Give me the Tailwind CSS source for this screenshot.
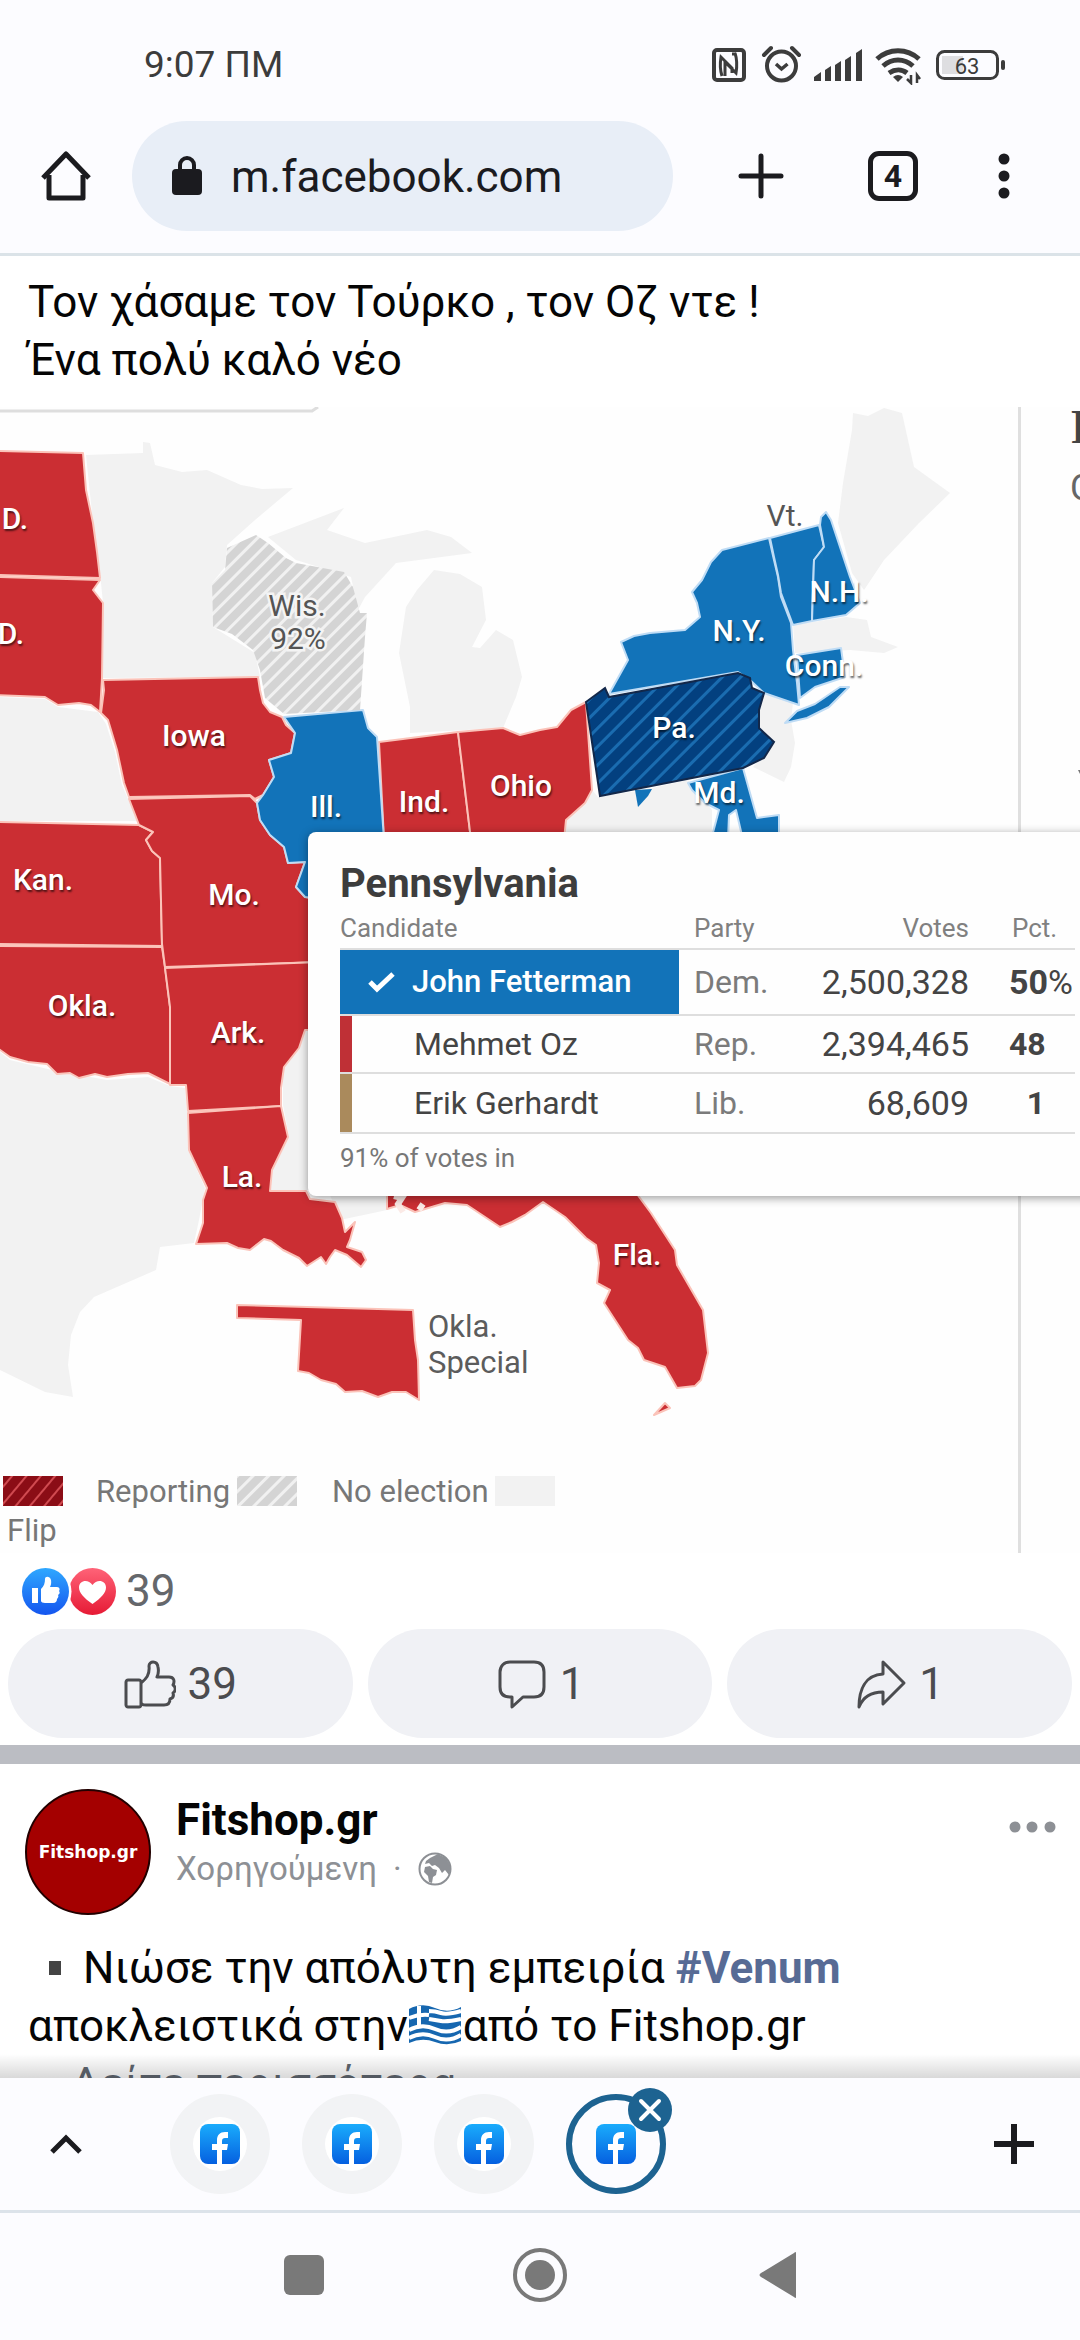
<!DOCTYPE html>
<html lang="el">
<head>
<meta charset="utf-8">
<meta name="viewport" content="width=device-width, initial-scale=1">
<title>m.facebook.com</title>
<script src="https://cdn.jsdelivr.net/npm/@tailwindcss/browser@4"></script>
</head>
<body class="flex h-screen flex-col overflow-hidden bg-white font-['Roboto',sans-serif] text-[#050505]">

<!-- Status bar -->
<div class="flex h-[120px] shrink-0 items-center justify-between bg-[#fcfcff] pt-2.5 pr-[75px] pl-[144px] text-[#3c3c3c]">
  <span class="text-[37px] leading-10">9:07 ΠΜ</span>
  <svg class="h-10 w-[294px]" viewBox="710 44 294 40" fill="none" stroke="#3c3c3c" aria-hidden="true">
    <rect x="713" y="49" width="30" height="30" rx="3" stroke-width="4"/>
    <path d="M721 75c-2-6-2-13-1-19l11 11v5M734 52c2 6 2 14 1 20l-11-11v14M731 53h4" stroke-width="3"/>
    <circle cx="780.500" cy="65" r="14.500" stroke-width="4"/>
    <path d="M775 63l5.500 5 6-5" stroke-width="3.500"/>
    <path d="M763 54l7-7M798 54l-7-7" stroke-width="4" stroke-linecap="round"/>
    <path d="M813 80v-4l7-5v9zM824 80V69l6-4v15zM834 80V64l6-4v20zM844 80V59l6-4v25zM855 80V52l6-4v32z" fill="#3c3c3c" stroke="none"/>
    <path d="M876 58c12-11 30-11 42 0M882 65c9-8 21-8 30 0M888 72c6-4 13-4 18 0" stroke-width="5"/>
    <path d="M892 76q5-4 10 0l-5 5z" fill="#3c3c3c" stroke="none"/>
    <path d="M910 74v8l-4-4M916 82v-8l3 4" stroke-width="2.500"/>
    <rect x="941" y="55" width="21" height="18" fill="#dedee1" stroke="none"/>
    <rect x="936.500" y="50.500" width="60" height="27" rx="7" stroke-width="3"/>
    <path d="M1002 61v6" stroke-width="4" stroke-linecap="round"/>
    <text x="966" y="72.500" text-anchor="middle" font-size="22" fill="#3c3c3c" stroke="none">63</text>
  </svg>
</div>

<!-- Browser toolbar -->
<header class="flex shrink-0 items-center border-b-[3px] border-[#dbe3e8] bg-[#fcfcff] pt-px pr-[64px] pb-[22px] pl-[38px]">
  <button aria-label="Home" class="shrink-0">
    <svg class="h-14 w-14" viewBox="0 0 56 56" fill="none" stroke="#1b1b1f" stroke-width="5" stroke-linejoin="round"><path d="M11 27v23h34V27"/><path d="M5 30L28 6l23 24"/></svg>
  </button>
  <label class="ml-[38px] flex h-[110px] max-w-[541px] min-w-0 flex-1 items-center rounded-full bg-[#e8eef7] pl-10">
    <svg class="h-10 w-[30px] shrink-0" viewBox="0 0 30 40" aria-hidden="true"><rect y="13" width="30" height="26" rx="4" fill="#1b1b1f"/><path d="M8 15V9a7 7 0 0 1 14 0v6" fill="none" stroke="#1b1b1f" stroke-width="4"/></svg>
    <input aria-label="Address" value="m.facebook.com" class="mt-0.5 ml-[29px] w-full min-w-0 bg-transparent text-[44px] leading-[56px] text-[#1b1b1f] outline-none">
  </label>
  <div class="ml-auto flex items-center">
    <button aria-label="New tab"><svg class="h-12 w-12" viewBox="0 0 48 48" stroke="#1b1b1f" stroke-width="5" stroke-linecap="round"><path d="M24 4v40M4 24h40"/></svg></button>
    <button aria-label="Tabs" class="ml-[83px] flex h-[50px] w-[50px] items-center justify-center rounded-[11px] border-[5px] border-[#1b1b1f] text-[32px] leading-8 font-bold text-[#1b1b1f]">4</button>
    <button aria-label="More" class="ml-[74px]"><svg class="h-12 w-6" viewBox="0 0 24 48" fill="#1b1b1f"><circle cx="12" cy="7" r="5.500"/><circle cx="12" cy="24" r="5.500"/><circle cx="12" cy="41" r="5.500"/></svg></button>
  </div>
</header>

<main class="relative min-h-0 flex-1 overflow-hidden">
  <article>
    <p class="px-7 pt-[17px] pb-[18px] text-[44px] leading-[58px]">Τον χάσαμε τον Τούρκο , τον Οζ ντε !<br>Ένα πολύ καλό νέο</p>

    <!-- Shared election map -->
    <div class="relative overflow-hidden bg-[#fefefe]">
      <svg class="block w-full" viewBox="0 407 1080 1146" font-size="30" role="img" aria-label="Senate election map">
        <defs>
          <pattern id="grey" width="11" height="11" patternUnits="userSpaceOnUse" patternTransform="rotate(45)"><rect width="11" height="11" fill="#d4d4d4"/><rect width="3" height="11" fill="#f1f1f1"/></pattern>
          <pattern id="blue" width="13" height="13" patternUnits="userSpaceOnUse" patternTransform="rotate(45)"><rect width="13" height="13" fill="#03407f"/><rect width="3" height="13" fill="#1a6cb0"/></pattern>
          <pattern id="red" width="11" height="11" patternUnits="userSpaceOnUse" patternTransform="rotate(40)"><rect width="11" height="11" fill="#8b0d16"/><rect width="2" height="11" fill="#d04a50"/></pattern>
        </defs>
        <path d="M0 411h312l6-4" fill="none" stroke="#dedede" stroke-width="3"/>
        <path d="M1019.500 407V1553" stroke="#dfdfdf" stroke-width="3"/>
        <text x="1071" y="443" font-family="Liberation Serif, serif" font-weight="700" font-size="48" fill="#444">P</text>
        <text x="1070" y="500" font-size="36" fill="#666">C</text>
        <path d="M1078 770l2 4v-4z" fill="#777"/>
        <!-- States with no race -->
        <g fill="#f2f2f2">
          <path d="M86 455L143 453V442L150 443L155 465L182 472L207 470L241 485L262 489L293 488L255 520L227 545L225 567L212 583L213 627L255 653L260 677L103 678V603L100 573L93 523Z"/>
          <path d="M268 537L344 508L327 530L365 543L427 530L451 537L472 553L396 563L365 597L358 610L351 577L296 560Z"/>
          <path d="M434 570L460 574L482 587L486 620L472 647L480 648L496 630L513 640L522 677L516 697L503 728L410 733V707L399 653L406 607L417 590Z"/>
          <path d="M0 697L45 699L58 707L98 712L106 724L115 752L122 785L128 799L138 821H0Z"/>
          <path d="M598 797L643 790L688 780L712 810V840H564L566 820L585 803L592 790Z"/>
          <path d="M853 413L868 416L884 408L902 413L914 467L950 493L919 523L884 560L864 590L852 573L838 523L843 483L852 430Z"/>
          <path d="M793 625L846 617L867 620L871 637L898 647L884 653L850 650L795 653Z"/>
          <path d="M764 692L793 703L791 720L795 743L791 767L784 782L753 767L774 742L759 727L760 710Z"/>
          <path d="M0 1052L10 1060L52 1070L107 1080L148 1077L170 1086L185 1088L187 1112L188 1150L205 1188L199 1220L194 1243L160 1247L156 1270L94 1297L80 1312L71 1335L68 1365L73 1397L45 1392L0 1370Z"/>
          <path d="M306 1028H320V1190H271L273 1170L289 1137L283 1105V1067Z"/>
          <path d="M330 1195H387V1210L340 1220Z"/>
        </g>
        <g fill="#cb2e33" stroke="#fbc3b9" stroke-width="2" stroke-linejoin="round">
          <path d="M-4 451L83 453L86 490L93 523L97 552L100 578L-4 575Z"/>
          <path d="M-4 577L100 580L93 590L103 603L102 678L100 712L91 705L79 703L58 705L45 697L-4 695Z"/>
          <path d="M103 680L258 677L260 690L263 703L270 712L282 717L286 725L295 733L291 753L269 760L274 777L263 795L255 799L250 795L129 797L124 783L117 750L108 720L101 713L104 690Z"/>
          <path d="M-4 822L139 825L153 832L146 840L152 851L160 858L162 946L-4 944Z"/>
          <path d="M-4 946L162 947L165 967L170 1007V1084L148 1073L128 1074L107 1077L95 1074L79 1078L70 1073L57 1074L47 1064L28 1062L10 1057L-4 1047Z"/>
          <path d="M129 799L250 796L257 803L260 820L270 835L284 847L288 863L305 862L296 887L305 897L320 899V962L165 967L162 944L160 858L152 851L146 840L153 832L139 825Z"/>
          <path d="M165 968L320 962V1030L305 1030L299 1048L284 1067L281 1088V1106L188 1111L186 1085H170V1007Z"/>
          <path d="M188 1113L281 1106L288 1137L272 1170L270 1191H306L310 1199L335 1202L342 1218L345 1232L355 1222L350 1240L347 1247L362 1252L366 1260L361 1267L347 1255L335 1250L330 1257L326 1264L321 1257L307 1266L299 1258L283 1250L271 1241L264 1239L250 1250L238 1248L227 1243L196 1244L203 1223V1200L207 1188L189 1150Z"/>
          <path d="M379 742L395 740L458 732L471 840H384Z"/>
          <path d="M458 732L503 728L520 735L540 730L557 727L571 710L586 702L592 790L585 803L566 820L564 840H471Z"/>
          <path d="M387 1190H634L651 1213L675 1250L677 1265L703 1310L708 1353L701 1380L695 1386L677 1388L665 1367L644 1360L638 1348L628 1340L604 1303L610 1290L597 1283L599 1263L596 1245L586 1238L565 1217L543 1202L525 1215L512 1222L500 1227L467 1205L445 1203L415 1212L400 1205L387 1209Z"/>
          <path d="M654 1415L665 1403L670 1408Z"/>
          <path d="M237 1305L413 1310L415 1340L418 1360L419 1400L406 1392L392 1392L378 1397L362 1391L345 1392L336 1384L321 1380L309 1373L298 1371L301 1320L237 1318Z"/>
        </g>
        <path d="M394 1196L402 1198L398 1204L403 1212M423 1204l-4 6" stroke="#fbeae6" stroke-width="6" fill="none"/>
        <g fill="#1273b9" stroke="#bfdcf5" stroke-width="2" stroke-linejoin="round">
          <path d="M284 717L363 710L368 728L377 737L384 840H320V899L305 897L296 887L305 862L288 863L284 847L270 835L260 820L257 803L263 795L274 777L269 760L291 753L295 733Z"/>
          <path d="M609 694L628 660L621 642L634 636L650 633L685 630L700 617L697 603L692 592L702 580L711 562L722 550L769 538L774 560L778 577L781 597L791 623L793 650L797 683L799 705L764 693L750 680L738 672Z"/>
          <path d="M797 711L815 704L840 687H849L829 707L807 718L785 723Z"/>
          <path d="M770 538L819 525L824 547L814 560L812 621L793 625L781 593L778 575L774 557Z"/>
          <path d="M820 525L821 517L826 512L831 520L850 577L860 603L846 615L812 621L814 560L824 547Z"/>
          <path d="M797 655L841 648L845 677L815 687L800 698Z"/>
          <path d="M688 783L743 768L757 818L779 815V840H743L736 810L729 815L728 840H711L719 810L705 803L692 790Z"/>
          <path d="M635 790L652 789L648 796L638 807Z" stroke="none"/>
        </g>
        <path d="M227 548L256 535L268 543L286 558L296 563L344 572L353 587L360 613L367 613L365 637L360 710L284 714L265 698L260 670L253 650L232 634L213 627L212 583L225 570Z" fill="url(#grey)"/>
        <path d="M586 702L605 688L609 697L738 673L750 678L752 688L764 693L759 710V728L774 742L764 758L743 768L600 796Z" fill="url(#blue)" stroke="#13284a" stroke-width="2"/>

        <g fill="#fff" font-weight="500" text-anchor="middle" class="[text-shadow:1px_2px_2px_#0009]">
          <text x="15" y="529">D.</text><text x="11" y="644">D.</text>
          <text x="194" y="746">Iowa</text><text x="326" y="817">Ill.</text><text x="424" y="812">Ind.</text><text x="521" y="796">Ohio</text>
          <text x="43" y="890">Kan.</text><text x="234" y="905">Mo.</text><text x="82" y="1016">Okla.</text><text x="238" y="1043">Ark.</text>
          <text x="242" y="1187">La.</text><text x="637" y="1265">Fla.</text><text x="674" y="738">Pa.</text><text x="739" y="641">N.Y.</text>
          <text x="839" y="602">N.H.</text><text x="824" y="676">Conn.</text><text x="719" y="803">Md.</text>
        </g>
        <g fill="#555" text-anchor="middle" stroke="#f4f4f4" stroke-width="5" paint-order="stroke">
          <text x="297" y="616">Wis.</text><text x="298" y="649">92%</text><text x="785" y="526" stroke="none">Vt.</text>
        </g>
        <g fill="#5c5c5c" font-size="31"><text x="428" y="1337">Okla.</text><text x="428" y="1373">Special</text></g>
        <g fill="#777" font-size="31">
          <rect x="3" y="1476" width="60" height="30" fill="url(#red)"/>
          <text x="7" y="1541">Flip</text>
          <text x="96" y="1502">Reporting</text><rect x="237" y="1476" width="60" height="30" fill="url(#grey)"/>
          <text x="332" y="1502">No election</text><rect x="495" y="1476" width="60" height="30" fill="#f2f2f2"/>
        </g>
      </svg>

      <section class="absolute top-[425px] left-[308px] w-[800px] rounded-lg bg-[#fefefe] pt-7 pb-[22px] pl-8 text-[#444] shadow-[0_2px_10px_#0006]">
        <h2 class="text-[40px] leading-[48px] font-bold text-[#3d3d3d]">Pennsylvania</h2>
        <table class="w-[735px] table-fixed border-separate border-spacing-0 text-[32px] leading-10">
          <thead class="text-left text-[26px] leading-8 text-[#808080]">
            <tr class="h-[42px]">
              <th class="w-[339px] border-b-2 border-[#dedede] p-0 font-normal">Candidate</th>
              <th class="w-[115px] border-b-2 border-[#dedede] p-0 pl-[15px] font-normal">Party</th>
              <th class="w-[175px] border-b-2 border-[#dedede] p-0 text-right font-normal">Votes</th>
              <th class="border-b-2 border-[#dedede] p-0 pl-[43px] font-normal">Pct.</th>
            </tr>
          </thead>
          <tbody>
            <tr class="h-[66px]">
              <td class="border-b-2 border-[#dedede] bg-[#1273b9] p-0 text-[31px] font-medium text-white">
                <div class="flex items-center"><svg class="ml-7 h-6 w-7" viewBox="0 0 28 24" fill="none" stroke="#fff" stroke-width="5" aria-hidden="true"><path d="M2 12l7 7L25 4"/></svg><span class="ml-4">John Fetterman</span></div>
              </td>
              <td class="border-b-2 border-[#dedede] p-0 pl-[15px] text-[#7b7b7b]">Dem.</td>
              <td class="border-b-2 border-[#dedede] p-0 text-right text-[34px]">2,500,328</td>
              <td class="border-b-2 border-[#dedede] p-0 pl-10 text-[34px] whitespace-nowrap"><b>50</b>%</td>
            </tr>
            <tr class="h-[58px]">
              <td class="border-b-2 border-[#dedede] p-0 pl-[74px] shadow-[inset_12px_0_0_#bf3036]">Mehmet Oz</td>
              <td class="border-b-2 border-[#dedede] p-0 pl-[15px] text-[#7b7b7b]">Rep.</td>
              <td class="border-b-2 border-[#dedede] p-0 text-right text-[34px]">2,394,465</td>
              <td class="border-b-2 border-[#dedede] p-0 pl-10"><b>48</b></td>
            </tr>
            <tr class="h-[60px]">
              <td class="border-b-2 border-[#dedede] p-0 pl-[74px] shadow-[inset_12px_0_0_#aa8a5c]">Erik Gerhardt</td>
              <td class="border-b-2 border-[#dedede] p-0 pl-[15px] text-[#7b7b7b]">Lib.</td>
              <td class="border-b-2 border-[#dedede] p-0 text-right text-[34px]">68,609</td>
              <td class="border-b-2 border-[#dedede] p-0 pl-10"><b class="inline-block w-9 text-right">1</b></td>
            </tr>
          </tbody>
        </table>
        <p class="mt-2 text-[26px] leading-8 text-[#777]">91% of votes in</p>
      </section>
    </div>

    <!-- Reactions -->
    <div class="flex items-center px-[22px] pt-3 pb-3 text-[44px] leading-[52px] text-[#65676b]">
      <svg class="h-[47px] w-[94px]" viewBox="0 0 94 47" aria-hidden="true">
        <defs>
          <linearGradient id="like" x2="0" y2="1"><stop stop-color="#2fa8ff"/><stop offset="1" stop-color="#1455ef"/></linearGradient>
          <linearGradient id="love" x2="0" y2="1"><stop stop-color="#ff6378"/><stop offset="1" stop-color="#e61a35"/></linearGradient>
        </defs>
        <circle cx="70.500" cy="23.500" r="23.500" fill="url(#love)"/>
        <path d="M70.500 36C62 30 57 25 57 19.500c0-7 9-9 13.500-2.500C75 10.500 84 12.500 84 19.500 84 25 79 30 70.500 36z" fill="#fff"/>
        <circle cx="23.500" cy="23.500" r="26" fill="#fff"/><circle cx="23.500" cy="23.500" r="23.500" fill="url(#like)"/>
        <path d="M10 20h6v15h-6zM19 21c3-3 4-6 4-10 0-3 5-3 6 1 .5 3 0 5-1 7h7c3 0 3 3 2 4 1 1 1 3-1 4 1 1 0 3-1 4 0 2-1 4-4 4h-8c-2 0-4-1-4-2z" fill="#fff"/>
      </svg>
      <span class="ml-2.5">39</span>
    </div>
    <div class="grid grid-cols-3 gap-[15px] px-2 text-[44px] leading-[52px] text-[#4b4c4f]">
      <button class="flex h-[109px] items-center justify-center gap-3 rounded-full bg-[#f0f1f5]">
        <svg class="h-[52px] w-[52px]" viewBox="0 0 52 52" fill="none" stroke="#4b4c4f" stroke-width="3" stroke-linejoin="round"><path d="M4 22h11c1 0 2 1 2 2v23c0 1-1 2-2 2H4c-1 0-2-1-2-2V24c0-1 1-2 2-2zM17 25c5-4 9-8 8-17 0-5 8-6 9 1 1 5 0 8-1 10h12c5 0 6 4 4 8 3 2 3 6 0 8 1 3 0 5-3 6 0 4-2 6-6 6H22c-3 0-5-1-5-3"/></svg>39
      </button>
      <button class="flex h-[109px] items-center justify-center gap-3 rounded-full bg-[#f0f1f5]">
        <svg class="h-[52px] w-[52px]" viewBox="0 0 52 52" fill="none" stroke="#4b4c4f" stroke-width="3" stroke-linejoin="round"><path d="M14 4h24c7 0 10 4 10 10v15c0 7-4 10-10 10H27L16 49V39h-2C7 39 4 35 4 29V14C4 8 8 4 14 4z"/></svg>1
      </button>
      <button class="flex h-[109px] items-center justify-center gap-3 rounded-full bg-[#f0f1f5]">
        <svg class="h-[52px] w-[52px]" viewBox="0 0 52 52" fill="none" stroke="#4b4c4f" stroke-width="3" stroke-linejoin="round"><path d="M28 4l21 21-21 21V34C16 34 8 39 4 49 4 32 10 17 28 16z"/></svg>1
      </button>
    </div>
  </article>

  <!-- Sponsored post -->
  <article class="mt-[7px] border-t-[19px] border-[#bbbdc3] pt-[25px]">
    <div class="flex items-start pr-6 pl-[25px]">
      <div class="flex h-[126px] w-[126px] shrink-0 items-center justify-center rounded-full border-2 border-[#200] bg-[#a40000] font-['DejaVu_Sans',sans-serif] text-[17px] leading-5 font-bold text-white">Fitshop.gr</div>
      <div class="ml-[25px]">
        <a href="#" class="block pt-1 text-[44px] leading-[54px] font-bold">Fitshop.gr</a>
        <div class="mt-0.5 flex items-center text-[33px] leading-10 text-[#8d9095]">Χορηγούμενη<span class="mx-4">·</span>
          <svg class="h-[34px] w-[34px]" viewBox="0 0 34 34" aria-label="Public"><circle cx="17" cy="17" r="15.500" fill="none" stroke="#8d9095" stroke-width="2"/><path d="M12 6l8-4 8 4 5 9-2 8-4-5-3 3-3-5-4-3-3 1-3-3-4 1 1-3z" fill="#8d9095"/><path d="M7 15l5-1 3 3 4 1-1 5-3 2-1 6-3-1-1-6-4-4z" fill="#8d9095"/></svg>
        </div>
      </div>
      <button aria-label="Post options" class="mt-6 ml-auto"><svg class="h-7 w-12" viewBox="0 0 48 28" fill="#8d9095"><circle cx="7" cy="14" r="5.500"/><circle cx="24" cy="14" r="5.500"/><circle cx="42" cy="14" r="5.500"/></svg></button>
    </div>
    <p class="px-7 pt-6 text-[44px] leading-[58px] whitespace-nowrap"><span class="mr-[22px] ml-[21px] inline-block h-3.5 w-3 bg-[#444] align-[8px]"></span>Νιώσε την απόλυτη εμπειρία <a href="#" class="font-bold text-[#576b95]">#Venum</a><br>αποκλειστικά στην<svg class="inline-block h-10 w-[55px] align-[-4px]" viewBox="0 0 55 40" aria-label="Greece"><path d="M1 4Q14-3 27 3T53 2V36Q40 42 27 37T1 38Z" fill="#1667b0"/><g fill="none" stroke="#fff" stroke-width="4"><path d="M21 6Q27 6 33 8T53 6M21 14Q27 15 33 16T53 14M1 25Q14 18 27 24T53 22M1 33Q14 26 27 32T53 30M1 13Q11 9 21 10M11 1V20"/></g></svg>από το Fitshop.gr<br><a href="#" class="ml-[42px] text-[#606770]">Δείτε περισσότερα</a></p>
  </article>
  <div class="pointer-events-none absolute inset-x-0 bottom-0 h-6 bg-linear-to-b from-transparent to-black/15"></div>
</main>

<!-- Tab group strip -->
<div class="flex h-[135px] shrink-0 items-center border-b-[3px] border-[#dce3ea] bg-[#fcfcff] pr-[42px] pl-[42px]">
  <svg class="absolute h-0 w-0" aria-hidden="true">
    <linearGradient id="fbg" x2="0" y2="1"><stop stop-color="#1aacfc"/><stop offset="1" stop-color="#0560e0"/></linearGradient>
    <symbol id="fb" viewBox="0 0 40 40"><rect width="40" height="40" rx="8" fill="url(#fbg)"/><path d="M17 40V26h-5v-6h5v-4c0-5 3-8 8-8h3v6h-3c-2 0-3 1-3 3v3h6l-1 6h-5v14z" fill="#fff"/></symbol>
  </svg>
  <button aria-label="Show tabs"><svg class="h-12 w-12" viewBox="0 0 48 48" fill="none" stroke="#1b1b1f" stroke-width="5"><path d="M10 32l14-14 14 14"/></svg></button>
  <div class="ml-20 flex gap-8">
    <button aria-label="Facebook tab 1" class="flex h-[100px] w-[100px] items-center justify-center rounded-full bg-[#f2f3f5]"><span class="flex h-[54px] w-[54px] items-center justify-center rounded-full bg-white"><svg class="h-10 w-10"><use href="#fb"/></svg></span></button>
    <button aria-label="Facebook tab 2" class="flex h-[100px] w-[100px] items-center justify-center rounded-full bg-[#f2f3f5]"><span class="flex h-[54px] w-[54px] items-center justify-center rounded-full bg-white"><svg class="h-10 w-10"><use href="#fb"/></svg></span></button>
    <button aria-label="Facebook tab 3" class="flex h-[100px] w-[100px] items-center justify-center rounded-full bg-[#f2f3f5]"><span class="flex h-[54px] w-[54px] items-center justify-center rounded-full bg-white"><svg class="h-10 w-10"><use href="#fb"/></svg></span></button>
    <button aria-label="Close current tab" class="relative flex h-[100px] w-[100px] items-center justify-center rounded-full border-[6px] border-[#1d6391]"><svg class="h-10 w-10"><use href="#fb"/></svg>
      <svg class="absolute -top-3 -right-3 h-11 w-11" viewBox="0 0 44 44"><circle cx="22" cy="22" r="22" fill="#1d6391"/><path d="M13 13l18 18M31 13L13 31" stroke="#fff" stroke-width="4" stroke-linecap="round"/></svg>
    </button>
  </div>
  <button aria-label="New tab in group" class="ml-auto"><svg class="h-12 w-12" viewBox="0 0 48 48" stroke="#1b1b1f" stroke-width="6"><path d="M24 4v40M4 24h40"/></svg></button>
</div>

<!-- System navigation -->
<nav class="flex h-[127px] shrink-0 items-center justify-center gap-[180px] bg-[#fcfcff] pb-1">
  <button aria-label="Recents"><svg class="h-14 w-14" viewBox="0 0 56 56"><rect x="8" y="8" width="40" height="40" rx="6" fill="#797979"/></svg></button>
  <button aria-label="Home screen"><svg class="h-14 w-14" viewBox="0 0 56 56"><circle cx="28" cy="28" r="25" fill="none" stroke="#797979" stroke-width="4"/><circle cx="28" cy="28" r="15" fill="#797979"/></svg></button>
  <button aria-label="Back"><svg class="h-14 w-14" viewBox="0 0 56 56"><path d="M48 6v44q0 2-2 0L13 30q-3-2 0-4L46 6q2-2 2 0z" fill="#797979"/></svg></button>
</nav>
</body>
</html>
